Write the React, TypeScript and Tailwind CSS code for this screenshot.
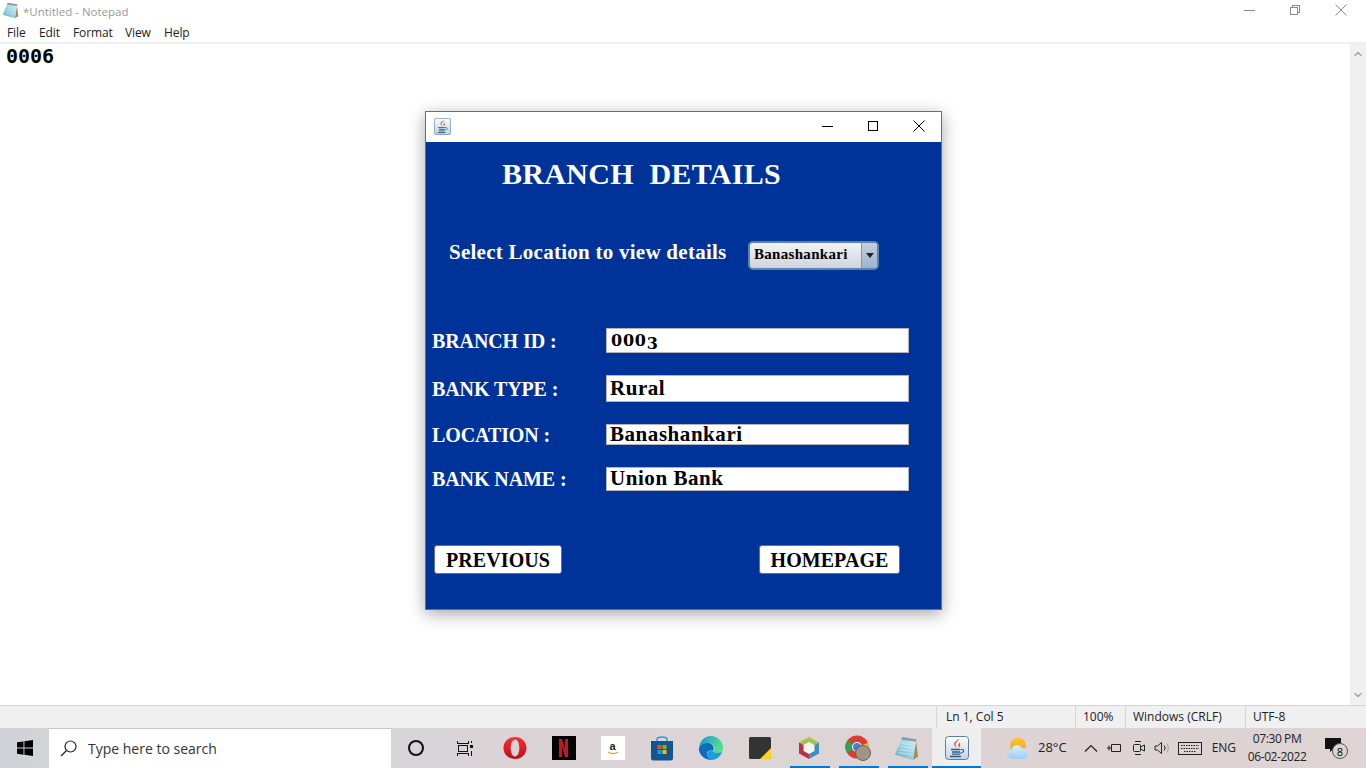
import React from 'react';
import { ChevronUp, ChevronDown } from 'lucide-react';

const serif = "font-['Liberation_Serif',serif] font-bold";
const segoe = "font-['Open_Sans','Noto_Sans',sans-serif]";

const JavaIcon = ({ size }: { size: number }) => (
  <svg width={size} height={size} viewBox="0 0 24 24">
    <defs>
      <linearGradient id="jv" x1="0" y1="0" x2="0" y2="1">
        <stop offset="0" stopColor="#fbfcfd" />
        <stop offset="1" stopColor="#c3d3e2" />
      </linearGradient>
    </defs>
    <rect x="0.500" y="0.500" width="23" height="23" rx="3" fill="url(#jv)" stroke="#5d7f9c" />
    <path d="M13.500 2.500c1 2.500-3.500 3.500-3 6.500.2 1.200 1.200 1.800 1.400 3-1.200-1.200-3.200-2.400-2.800-4.500.4-2.200 3.800-3 4.400-5z" fill="#e0561f" />
    <path d="M15.500 6c-1.300 1.200-2.600 2-2.100 3.600.2.800.6 1.300.5 2 1.200-1 1.700-2.200 1.100-3.400-.4-.8 0-1.400.5-2.200z" fill="#e0561f" />
    <path d="M6 13.500h9.500M7 16h8M7 18.200h8M5 20.500h11" stroke="#2f5f86" strokeWidth="1.300" fill="none" />
    <path d="M16 13.500c3.500-.6 4 2.800-.8 3.800" stroke="#2f5f86" strokeWidth="1.100" fill="none" />
  </svg>
);

const NotepadIcon = ({ size }: { size: number }) => (
  <svg width={size} height={size} viewBox="0 0 24 24">
    <defs>
      <linearGradient id="np" x1="0" y1="1" x2="1" y2="0">
        <stop offset="0" stopColor="#5fa9c0" />
        <stop offset="0.600" stopColor="#a9dbe8" />
        <stop offset="1" stopColor="#dff2f6" />
      </linearGradient>
    </defs>
    <path d="M21 3l2 17-5 3z" fill="#a38a5a" />
    <path d="M8 1l13.500 2L18.500 23 1 18z" fill="url(#np)" />
    <path d="M8 1l13.500 2-.4 2.500L7 3.500z" fill="#8c9aa3" />
    <path d="M6.500 7l13.500 2M5.500 10l14 2M4.500 13l14.500 2M3.500 16l15 2" stroke="#c9ecf3" strokeWidth="0.700" />
  </svg>
);

const WinMin = ({ color }: { color: string }) => (
  <svg width="12" height="12" viewBox="0 0 12 12" stroke={color} fill="none" shapeRendering="crispEdges"><path d="M0 6.500h11" /></svg>
);
const WinMax = () => (
  <svg width="12" height="12" viewBox="0 0 12 12" stroke="#000" fill="none" shapeRendering="crispEdges"><rect x="1.500" y="1.500" width="9" height="9" /></svg>
);
const WinClose = ({ color }: { color: string }) => (
  <svg width="12" height="12" viewBox="0 0 12 12" stroke={color} fill="none"><path d="M0.500 0.500l11 11M11.500 0.500l-11 11" /></svg>
);
const WinRestore = () => (
  <svg width="12" height="12" viewBox="0 0 12 12" stroke="#8a8a8a" fill="none" shapeRendering="crispEdges"><path d="M1.500 3.500h7v7h-7zM3.500 3.500v-2h7v7h-2" /></svg>
);

const Field = ({ children, className }: { children: React.ReactNode; className: string }) => (
  <div className={`w-[303px] bg-white border border-[#b4b4b4] pl-[3px] flex items-center text-black text-[21px] tracking-[0.55px] ${className}`}>
    {children}
  </div>
);

const Row = ({ label, children, fieldClass, rowClass }: { label: string; children: React.ReactNode; fieldClass: string; rowClass: string }) => (
  <div className={`flex items-center pl-[6px] ${rowClass}`}>
    <div className="w-[174px] text-white text-[20px] leading-none tracking-[-0.1px] whitespace-nowrap">{label}</div>
    <Field className={fieldClass}>{children}</Field>
  </div>
);

const JavaWindow = () => (
  <div className="absolute left-[425px] top-[111px] w-[517px] h-[499px] border border-[#6e6e6e] flex flex-col bg-white shadow-[0_4px_16px_rgba(0,0,0,0.35)]">
    <div className="h-[30px] pb-[2px] flex items-center shrink-0">
      <div className="ml-[8px] flex"><JavaIcon size={17} /></div>
      <div className="ml-auto flex items-center">
        <div className="w-[45px] flex justify-center"><WinMin color="#000" /></div>
        <div className="w-[45px] mr-[1px] flex justify-center"><WinMax /></div>
        <div className="w-[45px] flex justify-center"><WinClose color="#000" /></div>
      </div>
    </div>
    <div className={`flex-1 bg-[#003399] ${serif}`}>
      <div className="pl-[76px] pt-[12px] text-white text-[30px] leading-[40px] tracking-[0.3px] whitespace-pre">BRANCH  DETAILS</div>
      <div className="flex items-center pl-[23px] mt-[47px] h-[29px]">
        <div className="w-[299px] text-white text-[21px] tracking-[0.26px] whitespace-nowrap -mt-[5px]">Select Location to view details</div>
        <div className="w-[131px] h-[29px] rounded-[5px] border-2 border-[#5b83ac] bg-gradient-to-b from-[#f2f3f6] to-[#cfd4dc] flex items-center">
          <div className="flex-1 pl-[4px] pb-[2px] text-black text-[15px] tracking-[0.3px]">Banashankari</div>
          <div className="w-[16px] h-full border-l border-[#7d97b3] rounded-r-[3px] bg-gradient-to-b from-[#c3d0de] to-[#9db3cb] flex items-center justify-center">
            <div className="w-0 h-0 border-l-[4px] border-r-[4px] border-t-[5px] border-l-transparent border-r-transparent border-t-[#222]" />
          </div>
        </div>
      </div>
      <Row label="BRANCH ID :" fieldClass="h-[25px]" rowClass="mt-[58px]">
        <span className="font-['DejaVu_Serif',serif] text-[16px] leading-none tracking-[0.8px] pl-[1px]">
          000<span className="inline-block translate-y-[3px]">3</span>
        </span>
      </Row>
      <Row label="BANK TYPE :" fieldClass="h-[27px]" rowClass="mt-[22px]">Rural</Row>
      <Row label="LOCATION :" fieldClass="h-[21px]" rowClass="mt-[22px]">Banashankari</Row>
      <Row label="BANK NAME :" fieldClass="h-[24px]" rowClass="mt-[22px]">Union Bank</Row>
      <div className="flex pl-[8px] mt-[54px]">
        <div className="w-[128px] h-[29px] rounded-[3px] bg-white border border-[#5e7396] flex items-center justify-center text-black text-[20px] tracking-[0.1px]">PREVIOUS</div>
        <div className="w-[141px] h-[29px] ml-[197px] rounded-[3px] bg-white border border-[#5e7396] flex items-center justify-center text-black text-[20px] tracking-[0.05px]">HOMEPAGE</div>
      </div>
    </div>
  </div>
);

const MenuBar = () => (
  <div className={`h-[18px] flex items-center text-[12px] tracking-[-0.1px] text-[#222] ${segoe}`}>
    <span className="ml-[7px] w-[32px]">File</span>
    <span className="w-[34px]">Edit</span>
    <span className="w-[52px]">Format</span>
    <span className="w-[39px]">View</span>
    <span>Help</span>
  </div>
);

const StatusCell = ({ text, className }: { text: string; className: string }) => (
  <div className={`h-full border-l border-[#d7d7d7] flex items-center text-[12px] text-[#222] ${className}`}>{text}</div>
);

const TaskIcon = ({ children, on, active }: { children: React.ReactNode; on?: boolean; active?: boolean }) => (
  <div className={`w-[49px] h-full flex items-center justify-center relative ${active ? 'bg-[#efeeee] ml-[1px]' : ''}`}>
    {children}
    {on && <div className={`absolute bottom-0 h-[2px] bg-[#0078d4] ${active ? 'left-0 right-0' : 'left-[6px] w-[40px]'}`} />}
  </div>
);

const Taskbar = () => (
  <div className={`h-[40px] flex bg-gradient-to-r from-[#d2d3d8] via-[#dcd4d6] to-[#dfd3d3] ${segoe}`}>
    <div className="w-[49px] flex items-center justify-center">
      <svg width="16" height="16" viewBox="0 0 16 16" fill="#000">
        <path d="M0 2.300l6.500-.9v6.200H0zM7.400 1.300L16 0v7.600H7.400zM0 8.500h6.500v6.200L0 13.700zM7.400 8.500H16V16l-8.600-1.200z" />
      </svg>
    </div>
    <div className="w-[342px] bg-white border-t border-[#c8c8c8] flex items-center">
      <svg width="17" height="17" viewBox="0 0 17 17" fill="none" stroke="#222" strokeWidth="1.200" className="ml-[11px]">
        <circle cx="10.500" cy="6.500" r="5.500" />
        <path d="M6.500 10.500L1 16" />
      </svg>
      <span className="ml-[11px] text-[14px] text-[#333]">Type here to search</span>
    </div>
    <TaskIcon>
      <div className="w-[16px] h-[16px] rounded-full border-2 border-[#111]" />
    </TaskIcon>
    <TaskIcon>
      <svg width="16" height="15" viewBox="0 0 16 15" fill="none" stroke="#111" shapeRendering="crispEdges">
        <path d="M0.500 0v2.500h11V0M1.500 4.500h9v6h-9zM0.500 15v-2.500h11V15M14.500 0v2M14.500 10v5" />
        <rect x="13" y="4" width="3" height="3" fill="#111" stroke="none" />
      </svg>
    </TaskIcon>
    <div className="w-[1px]" />
    <TaskIcon>
      <svg width="24" height="24" viewBox="0 0 24 24">
        <defs>
          <linearGradient id="op" x1="0" y1="0" x2="0" y2="1">
            <stop offset="0" stopColor="#ff2b34" />
            <stop offset="1" stopColor="#b8101c" />
          </linearGradient>
        </defs>
        <path fillRule="evenodd" d="M12 1c6.600 0 11.500 4.900 11.500 11S18.600 23 12 23 .5 18.100.5 12 5.400 1 12 1zm0 2.500c-2.800 0-4.300 3.800-4.300 8.500s1.500 8.500 4.300 8.500 4.300-3.800 4.300-8.500S14.800 3.500 12 3.500z" fill="url(#op)" />
      </svg>
    </TaskIcon>
    <TaskIcon>
      <div className="w-[24px] h-[24px] bg-black flex items-center justify-center">
        <svg width="9" height="18" viewBox="0 0 9 18">
          <path d="M0 0h3l3 10V0h3v18H6L3 8v10H0z" fill="#c9151d" />
        </svg>
      </div>
    </TaskIcon>
    <TaskIcon>
      <div className="w-[24px] h-[24px] bg-white flex flex-col items-center justify-center font-['Liberation_Sans',sans-serif] text-[11px] font-bold leading-[10px] text-[#222]">
        a
        <svg width="12" height="4" viewBox="0 0 12 4"><path d="M1 1c3 2 7 2 10 0" stroke="#f39a1e" strokeWidth="1.200" fill="none" /></svg>
      </div>
    </TaskIcon>
    <TaskIcon>
      <svg width="24" height="25" viewBox="0 0 24 25">
        <path d="M7 6V3.500C7 1.500 9 1 12 1s5 .5 5 2.500V6" fill="none" stroke="#27a0e0" strokeWidth="1.500" />
        <path d="M1 5h22v17a2.500 2.500 0 0 1-2.500 2.500h-17A2.500 2.500 0 0 1 1 22z" fill="#14558f" />
        <rect x="7.500" y="9" width="4" height="4" fill="#f25022" />
        <rect x="12.500" y="9" width="4" height="4" fill="#7fba00" />
        <rect x="7.500" y="14" width="4" height="4" fill="#00a4ef" />
        <rect x="12.500" y="14" width="4" height="4" fill="#ffb900" />
      </svg>
    </TaskIcon>
    <TaskIcon>
      <svg width="24" height="24" viewBox="0 0 24 24">
        <defs>
          <linearGradient id="eg" x1="0" y1="0" x2="1" y2="0.300">
            <stop offset="0" stopColor="#1d8fd8" />
            <stop offset="1" stopColor="#4fe08f" />
          </linearGradient>
        </defs>
        <path d="M12 0a12 12 0 0 1 12 12c0 3-2.500 5-5.500 5-2 0-3.500-.8-3.500-1.800 0-.6.800-1 .8-2.700 0-3-3-5.500-6.800-5.500C5.500 7 1.500 9 .3 12 .3 5 5.500 0 12 0z" fill="url(#eg)" />
        <path d="M.3 11.500C1.500 8.500 5 7 8.500 7c3.800 0 6.300 2.500 6.300 5.500 0 1-.5 1.500-.8 2-2.500-1-6 0-6 3.200 0 2.600 2 5.300 5.500 6.200C6 24.500-.5 19-.3 11.500z" fill="#0c6cbd" />
        <path d="M14 14.500c.5 2 3 2.700 5 2.500 2 0 3.500-1 4.500-2-1.500 5-6 9-11 9-3-.5-4.500-3-4.500-5.300 0-3 3.500-5.200 6-4.200z" fill="#1b9de2" />
      </svg>
    </TaskIcon>
    <TaskIcon>
      <svg width="22" height="22" viewBox="0 0 22 22">
        <rect width="22" height="22" rx="1.500" fill="#333" />
        <path d="M11 22L22 11v9.500a1.500 1.500 0 0 1-1.500 1.500z" fill="#ffd21e" />
      </svg>
    </TaskIcon>
    <TaskIcon on>
      <svg width="24" height="24" viewBox="0 0 24 24">
        <path d="M12 1l10 5.500L12 12 2 6.500z" fill="#a6c24a" />
        <path d="M2 6.500L12 12v11L2 17.500z" fill="#b5304f" />
        <path d="M22 6.500L12 12v11l10-5.500z" fill="#3c8fc4" />
        <path d="M12 6l5.500 3v6L12 18l-5.500-3V9z" fill="#f2f4ee" />
      </svg>
    </TaskIcon>
    <TaskIcon on>
      <div className="relative w-[26px] h-[26px]">
        <svg width="24" height="24" viewBox="0 0 24 24">
          <circle cx="12" cy="12" r="11.500" fill="#dc3d33" />
          <path d="M12 12L2 18A11.500 11.500 0 0 1 2.500 5.500z" fill="#2fa350" />
          <path d="M12 12l10.500-4A11.500 11.500 0 0 1 12 23.500z" fill="#fbc02d" />
          <circle cx="12" cy="12" r="5" fill="#fff" />
          <circle cx="12" cy="12" r="4" fill="#3f7fe6" />
        </svg>
        <div className="absolute right-0 bottom-0 w-[16px] h-[16px] rounded-full bg-[#a09580] border border-[#6a6152]" />
      </div>
    </TaskIcon>
    <TaskIcon on><NotepadIcon size={25} /></TaskIcon>
    <TaskIcon on active><JavaIcon size={24} /></TaskIcon>
    <div className="flex-1 flex items-center relative text-[#222]">
      <svg width="23" height="23" viewBox="0 0 23 23" className="ml-[26px]">
        <defs>
          <linearGradient id="sn" x1="0" y1="0" x2="0" y2="1">
            <stop offset="0" stopColor="#ffc83a" />
            <stop offset="1" stopColor="#f29a18" />
          </linearGradient>
          <linearGradient id="cl" x1="0" y1="0" x2="0" y2="1">
            <stop offset="0" stopColor="#d8eefc" />
            <stop offset="1" stopColor="#9fcdf0" />
          </linearGradient>
        </defs>
        <circle cx="11" cy="8.500" r="8" fill="url(#sn)" />
        <path d="M5 22a4.500 4.500 0 0 1-.5-9 5.500 5.500 0 0 1 10.500-1.500A5.300 5.300 0 0 1 17.500 22z" fill="url(#cl)" />
      </svg>
      <span className="ml-[8px] text-[13px]">28°C</span>
      <svg width="14" height="8" viewBox="0 0 14 8" fill="none" stroke="#222" strokeWidth="1.200" className="ml-[17px]">
        <path d="M1 7.500L7 1.500l6 6" />
      </svg>
      <svg width="16" height="12" viewBox="0 0 16 12" fill="none" stroke="#222" className="ml-[8px]">
        <path d="M5.500 2.500h9v7h-9zM5.500 6H1M3 3.500v5" />
      </svg>
      <svg width="14" height="18" viewBox="0 0 14 18" fill="none" stroke="#222" className="ml-[10px]">
        <rect x="1.500" y="5.500" width="7" height="7" rx="1" />
        <path d="M8.500 8l4-2v6l-4-2M3 2.500h6M3 15.500h6" />
      </svg>
      <svg width="16" height="14" viewBox="0 0 16 14" fill="none" stroke="#222" className="ml-[8px]">
        <path d="M1 5h2.500L7.500 1.500v11L3.500 9H1zM10 4.500a3.500 3.500 0 0 1 0 5" />
        <path d="M12.500 2.500a6.500 6.500 0 0 1 0 9" stroke="#999" />
      </svg>
      <svg width="24" height="13" viewBox="0 0 24 13" fill="none" stroke="#222" className="ml-[8px]">
        <rect x="0.500" y="0.500" width="23" height="12" />
        <path d="M3 3.500h18M3 6.500h18M6 9.500h12" strokeDasharray="1.500 1" />
      </svg>
      <span className="ml-[10px] text-[12px]">ENG</span>
      <div className="ml-[11px] w-[60px] text-[12px] leading-[18px] tracking-[-0.4px] text-center whitespace-nowrap">
        <div>07:30 PM</div>
        <div>06-02-2022</div>
      </div>
      <div className="absolute left-[344px] top-[10px] w-[22px] h-[22px]">
        <svg width="16" height="15" viewBox="0 0 16 15"><path d="M0 0h16v11H8l-3 3v-3H0z" fill="#111" /></svg>
        <div className="absolute left-[7px] top-[5px] w-[16px] h-[16px] rounded-full bg-[#dcd3d3] border border-[#555] flex items-center justify-center text-[11px] leading-none text-black">8</div>
      </div>
    </div>
  </div>
);

export default function App() {
  return (
    <div className={`relative w-[1366px] h-[768px] overflow-hidden bg-white flex flex-col ${segoe}`}>
      <div className="h-[24px] pb-[4px] flex items-center shrink-0">
        <div className="ml-[2px] mt-[1px] flex"><NotepadIcon size={17} /></div>
        <span className="ml-[4px] mt-[3px] text-[11.5px] text-[#9a9a9a]">*Untitled - Notepad</span>
        <div className="ml-auto flex items-center">
          <div className="mr-[33px] flex"><WinMin color="#8a8a8a" /></div>
          <div className="mr-[34px] flex"><WinRestore /></div>
          <div className="mr-[19px] flex"><WinClose color="#8a8a8a" /></div>
        </div>
      </div>
      <MenuBar />
      <div className="flex-1 flex border-t-2 border-[#efefef] min-h-0">
        <div className="flex-1 pl-[6px] font-['DejaVu_Sans_Mono',monospace] font-bold text-[20px] leading-[24px] text-black">0006</div>
        <div className="w-[16px] bg-[#f0f0f0] flex flex-col items-center justify-between py-[4px] text-[#a3a3a3]">
          <ChevronUp size={12} strokeWidth={3} />
          <ChevronDown size={12} strokeWidth={3} />
        </div>
      </div>
      <div className="h-[23px] bg-[#f0f0f0] border-t border-[#d4d4d4] flex shrink-0 pl-[936px]">
        <StatusCell text="Ln 1, Col 5" className="w-[139px] pl-[9px]" />
        <StatusCell text="100%" className="w-[50px] pl-[7px]" />
        <StatusCell text="Windows (CRLF)" className="w-[120px] pl-[7px]" />
        <StatusCell text="UTF-8" className="flex-1 pl-[7px]" />
      </div>
      <Taskbar />
      <JavaWindow />
    </div>
  );
}
